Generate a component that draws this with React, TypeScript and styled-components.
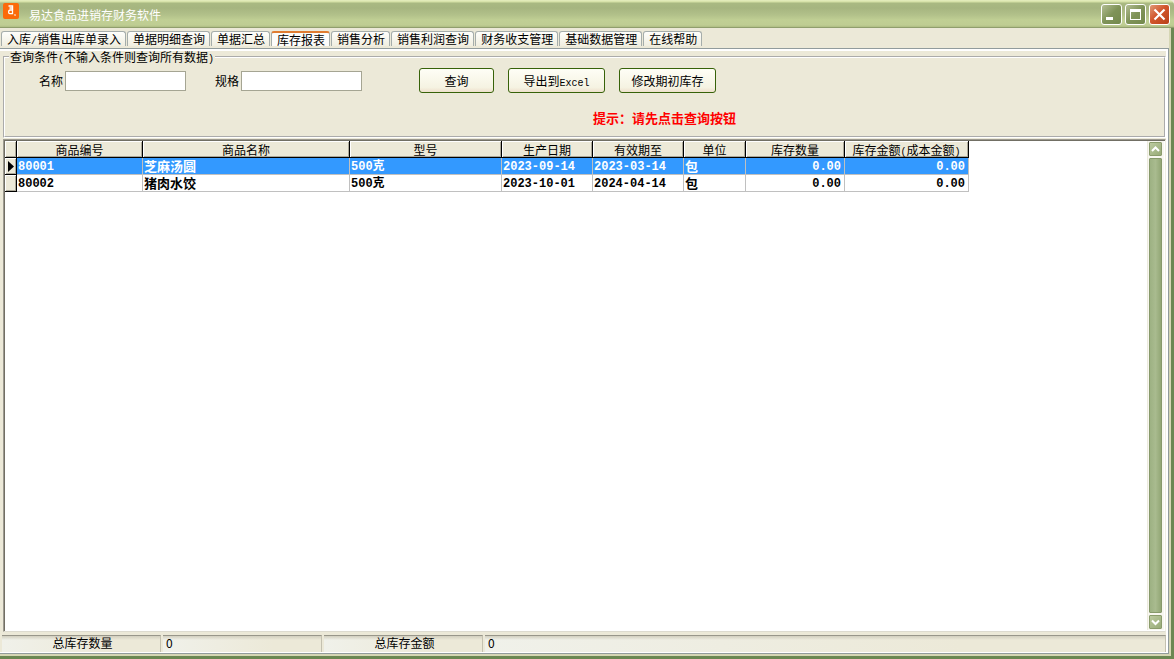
import React, { useState } from "react";
import styled, { createGlobalStyle, css } from "styled-components";

const Global = createGlobalStyle`
  * { box-sizing: border-box; }
  body {
    margin: 0;
    background: #ece9d8;
    color: #000;
    font: 12px/12px "Noto Sans CJK SC", "Liberation Sans", sans-serif;
  }
  button, input { font: inherit; color: inherit; }
`;

const Window = styled.div`
  display: flex;
  flex-direction: column;
  height: 100vh;
  min-height: 320px;
  overflow: hidden;
`;

const TitleBar = styled.header`
  display: flex;
  align-items: flex-start;
  flex: none;
  height: 28px;
  padding: 3px 4px 0 3px;
  border-radius: 0 5px 0 0;
  border-bottom: 1px solid #909e6d;
  background: linear-gradient(
    #e6efc0 0, #d3dfa4 2px, #a9b982 3px, #a6b580 8px, #b2c18a 15px,
    #c0cf94 20px, #bfcd93 25px, #aebd83 27px
  );
`;

const Title = styled.h1`
  flex: 1;
  margin: 0;
  padding: 6px 0 0 10px;
  font-size: 12px;
  line-height: 12px;
  font-weight: 400;
  color: #fff;
`;

const WindowButtons = styled.div`
  display: flex;
  gap: 3px;
  padding-top: 1px;
`;

const WindowButton = styled.button<{ $close?: boolean }>`
  width: 21px;
  height: 21px;
  padding: 0;
  border: 1px solid #fff;
  border-radius: 3px;
  background: ${(p) =>
    p.$close
      ? "linear-gradient(135deg, #e09a78, #d2562c 45%, #b8401a)"
      : "linear-gradient(135deg, #b3bd93, #7f9358 50%, #74894c)"};
  svg { display: block; }
`;

const Frame = styled.div`
  display: flex;
  flex-direction: column;
  flex: 1;
  min-height: 0;
  padding: 0 2px 2px 0;
  border-right: 3px solid #6b8752;
  border-bottom: 3px solid #6b8752;
  background: #d5d6b4;
`;

const TabStrip = styled.div`
  display: flex;
  gap: 1px;
  flex: none;
  height: 20px;
  padding: 3px 0 2px 1px;
  background: #ece9d8;
`;

const Tab = styled.button<{ $active: boolean }>`
  flex: none;
  height: 15px;
  padding: 0 4px 0 5px;
  border: 1px solid #a5adab;
  border-bottom: 0;
  border-radius: 3px 3px 0 0;
  background: linear-gradient(#fefefb, #f0eee0);
  line-height: 14px;
  white-space: nowrap;
  ${(p) =>
    p.$active &&
    css`
      border-top: 2px solid #e07c30;
      background: #fcfcfa;
      line-height: 12px;
    `}
`;

const Latin = styled.span`
  font-family: "Liberation Mono", monospace;
  font-size: 10px;
  line-height: 0;
`;

const Page = styled.main`
  display: flex;
  flex-direction: column;
  flex: 1;
  min-height: 0;
  padding: 2px 2px 1px 3px;
  border: 1px solid #919b9c;
  border-left: 0;
  background: #ece9d8;
  box-shadow: inset -2px 2px #fff, inset 0 -1px #fff;
`;

const QueryBox = styled.fieldset`
  flex: none;
  height: 87px;
  min-width: 0;
  margin: 0;
  padding: 0;
  border: 2px groove #fff;
`;

const Legend = styled.legend`
  height: 12px;
  margin-left: 4px;
  padding: 0 1px;
  line-height: 12px;
`;

const QueryRow = styled.div`
  display: flex;
  align-items: center;
  padding: 5px 0 0 34px;
`;

const Field = styled.label`
  display: flex;
  align-items: center;
  gap: 2px;
  margin-right: 29px;
`;

const TextInput = styled.input`
  width: 121px;
  height: 20px;
  padding: 0 3px;
  border: 1px solid #a5a593;
  background: #fff;
  outline: none;
`;

const Actions = styled.div`
  display: flex;
  gap: 14px;
  padding-left: 28px;
`;

const ActionButton = styled.button<{ $wide?: boolean }>`
  width: ${(p) => (p.$wide ? 97 : 75)}px;
  height: 25px;
  padding: 0;
  border: 1px solid #376209;
  border-radius: 3px;
  background: linear-gradient(#fefef6, #f5f3e2 80%, #eee0cc);
  white-space: nowrap;
`;

const Hint = styled.p`
  margin: 18px 0 0 588px;
  font-size: 13px;
  line-height: 14px;
  font-weight: 700;
  color: #f00;
  white-space: nowrap;
`;

const Grid = styled.section`
  display: flex;
  flex: 1;
  min-height: 0;
  margin: 1px 0 0;
  padding: 1px;
  border: 1px solid #9d9a90;
  border-right-color: #f1efe2;
  border-bottom-color: #dddbcf;
  background: #fff;
  box-shadow: inset 1px 1px #716f64;
`;

const TableArea = styled.div`
  flex: 1;
  min-width: 0;
  overflow: hidden;
`;

const Table = styled.table`
  width: 964px;
  table-layout: fixed;
  border-collapse: separate;
  border-spacing: 0;
`;

const HeadCell = styled.th`
  height: 17px;
  padding: 0;
  border-right: 1px solid #000;
  border-bottom: 1px solid #000;
  background: #ece9d8;
  box-shadow: inset 1px 1px #fff, inset -1px -1px #aca899;
  font-weight: 400;
  line-height: 15px;
  white-space: nowrap;
`;

const Marker = styled(HeadCell)`
  svg { display: block; margin-left: 2px; }
`;

const Row = styled.tr<{ $selected: boolean }>`
  color: ${(p) => (p.$selected ? "#fff" : "#000")};
  background: ${(p) => (p.$selected ? "#3399ff" : "#fff")};
`;

const Cell = styled.td<{ $kind: Kind }>`
  height: 17px;
  padding: ${(p) => (p.$kind === "text" ? 0 : 1)}px 3px 0 1px;
  border-right: 1px solid #c0c0c0;
  border-bottom: 1px solid #c0c0c0;
  font-family: ${(p) => (p.$kind === "text" ? "" : '"Liberation Mono", ')}"Noto Sans CJK SC", sans-serif;
  font-size: ${(p) => (p.$kind === "text" ? 13 : 12)}px;
  font-weight: 700;
  line-height: 14px;
  text-align: ${(p) => (p.$kind === "amount" ? "right" : "left")};
  white-space: nowrap;
`;

const ScrollBar = styled.div`
  display: flex;
  flex-direction: column;
  flex: none;
  gap: 2px;
  width: 17px;
  padding: 1px 2px 1px 1px;
  border-left: 1px solid #eceade;
  background: #f8f7f0;
`;

const ScrollButton = styled.button`
  flex: none;
  width: 13px;
  height: 14px;
  padding: 0;
  border: 1px solid #8b9c6c;
  border-radius: 1px;
  background: linear-gradient(135deg, #bccaa0, #98ab78);
  svg { display: block; }
`;

const ScrollThumb = styled.div`
  flex: 1;
  width: 13px;
  border: 1px solid #87996b;
  border-radius: 1px;
  background: linear-gradient(90deg, #9db183, #a9bb8f 50%, #93a776);
`;

const StatusBar = styled.footer`
  display: flex;
  flex: none;
  gap: 2px;
  height: 17px;
  margin: 3px 0 0 -1px;
`;

const StatusCell = styled.div<{ $label?: boolean; $fill?: boolean }>`
  flex: ${(p) => (p.$fill ? "1" : "none")};
  width: ${(p) => (p.$fill ? "auto" : "159px")};
  padding-left: 3px;
  border-top: 1px solid #98968a;
  border-right: 1px solid #c4c1b0;
  background: linear-gradient(#d2cfbf 0, rgba(236, 233, 216, 0) 4px),
    linear-gradient(90deg, #f0f1ea, #ece9d8 70%);
  line-height: 14px;
  text-align: ${(p) => (p.$label ? "center" : "left")};
`;

type Kind = "code" | "text" | "amount";

const tabs: React.ReactNode[] = [
  <>入库<Latin>/</Latin>销售出库单录入</>,
  "单据明细查询",
  "单据汇总",
  "库存报表",
  "销售分析",
  "销售利润查询",
  "财务收支管理",
  "基础数据管理",
  "在线帮助",
];

const columns: { title: React.ReactNode; width: number; kind: Kind }[] = [
  { title: "商品编号", width: 126, kind: "code" },
  { title: "商品名称", width: 207, kind: "text" },
  { title: "型号", width: 152, kind: "code" },
  { title: "生产日期", width: 91, kind: "code" },
  { title: "有效期至", width: 91, kind: "code" },
  { title: "单位", width: 62, kind: "text" },
  { title: "库存数量", width: 99, kind: "amount" },
  {
    title: <>库存金额<Latin>(</Latin>成本金额<Latin>)</Latin></>,
    width: 124,
    kind: "amount",
  },
];

const rows = [
  ["80001", "芝麻汤圆", "500克", "2023-09-14", "2023-03-14", "包", "0.00", "0.00"],
  ["80002", "猪肉水饺", "500克", "2023-10-01", "2024-04-14", "包", "0.00", "0.00"],
];

const Chevron = ({ down = false }: { down?: boolean }) => (
  <svg width="11" height="12" viewBox="0 0 11 12" fill="none" stroke="#fff" strokeWidth="2">
    <path d={down ? "M2 4.5 5.5 8 9 4.5" : "M2 8 5.5 4.5 9 8"} />
  </svg>
);

export default function App() {
  const [active, setActive] = useState(3);
  const [selected, setSelected] = useState(0);
  return (
    <>
      <Global />
      <Window>
        <TitleBar>
          <svg width="16" height="16" viewBox="0 0 16 16" aria-hidden="true">
            <rect width="16" height="16" rx="2" fill="#fb6a0a" />
            <g fill="none" stroke="#fff">
              <path d="M5.5 3H9.5V6.5" strokeWidth="1.4" />
              <path d="M9.5 6V10.7H6.8Q5.6 10.7 5.6 9T7 7H9.5M6.5 5H9" strokeWidth="1.3" />
              <path d="M11.5 11.5l1 1" strokeWidth="1.2" />
            </g>
          </svg>
          <Title>易达食品进销存财务软件</Title>
          <WindowButtons>
            <WindowButton aria-label="最小化">
              <svg width="19" height="19" viewBox="0 0 19 19">
                <path d="M4 12h7v3H4z" fill="#fff" />
              </svg>
            </WindowButton>
            <WindowButton aria-label="最大化">
              <svg width="19" height="19" viewBox="0 0 19 19">
                <path d="M4 4h11v11H4zM5 7v7h9V7z" fill="#fff" fillRule="evenodd" />
              </svg>
            </WindowButton>
            <WindowButton $close aria-label="关闭">
              <svg width="19" height="19" viewBox="0 0 19 19">
                <path d="M4.5 4.5l10 10M14.5 4.5l-10 10" stroke="#fff" strokeWidth="2.2" />
              </svg>
            </WindowButton>
          </WindowButtons>
        </TitleBar>
        <Frame>
          <TabStrip role="tablist">
            {tabs.map((label, i) => (
              <Tab
                key={i}
                role="tab"
                aria-selected={i === active}
                $active={i === active}
                onClick={() => setActive(i)}
              >
                {label}
              </Tab>
            ))}
          </TabStrip>
          <Page>
            <QueryBox>
              <Legend>
                查询条件<Latin>(</Latin>不输入条件则查询所有数据<Latin>)</Latin>
              </Legend>
              <QueryRow>
                <Field>
                  名称
                  <TextInput type="text" />
                </Field>
                <Field>
                  规格
                  <TextInput type="text" />
                </Field>
                <Actions>
                  <ActionButton>查询</ActionButton>
                  <ActionButton $wide>
                    导出到<Latin>Excel</Latin>
                  </ActionButton>
                  <ActionButton $wide>修改期初库存</ActionButton>
                </Actions>
              </QueryRow>
              <Hint>提示：请先点击查询按钮</Hint>
            </QueryBox>
            <Grid>
              <TableArea>
                <Table>
                  <colgroup>
                    <col style={{ width: 12 }} />
                    {columns.map((c, i) => (
                      <col key={i} style={{ width: c.width }} />
                    ))}
                  </colgroup>
                  <thead>
                    <tr>
                      <HeadCell />
                      {columns.map((c, i) => (
                        <HeadCell key={i} scope="col">{c.title}</HeadCell>
                      ))}
                    </tr>
                  </thead>
                  <tbody>
                    {rows.map((row, r) => (
                      <Row key={r} $selected={r === selected} onClick={() => setSelected(r)}>
                        <Marker scope="row">
                          {r === selected && (
                            <svg width="7" height="11" viewBox="0 0 7 11">
                              <path d="M1 0v11l6-5.5z" />
                            </svg>
                          )}
                        </Marker>
                        {row.map((value, c) => (
                          <Cell key={c} $kind={columns[c].kind}>{value}</Cell>
                        ))}
                      </Row>
                    ))}
                  </tbody>
                </Table>
              </TableArea>
              <ScrollBar>
                <ScrollButton aria-label="向上滚动"><Chevron /></ScrollButton>
                <ScrollThumb />
                <ScrollButton aria-label="向下滚动"><Chevron down /></ScrollButton>
              </ScrollBar>
            </Grid>
            <StatusBar>
              <StatusCell $label>总库存数量</StatusCell>
              <StatusCell>0</StatusCell>
              <StatusCell $label>总库存金额</StatusCell>
              <StatusCell $fill>0</StatusCell>
            </StatusBar>
          </Page>
        </Frame>
      </Window>
    </>
  );
}
